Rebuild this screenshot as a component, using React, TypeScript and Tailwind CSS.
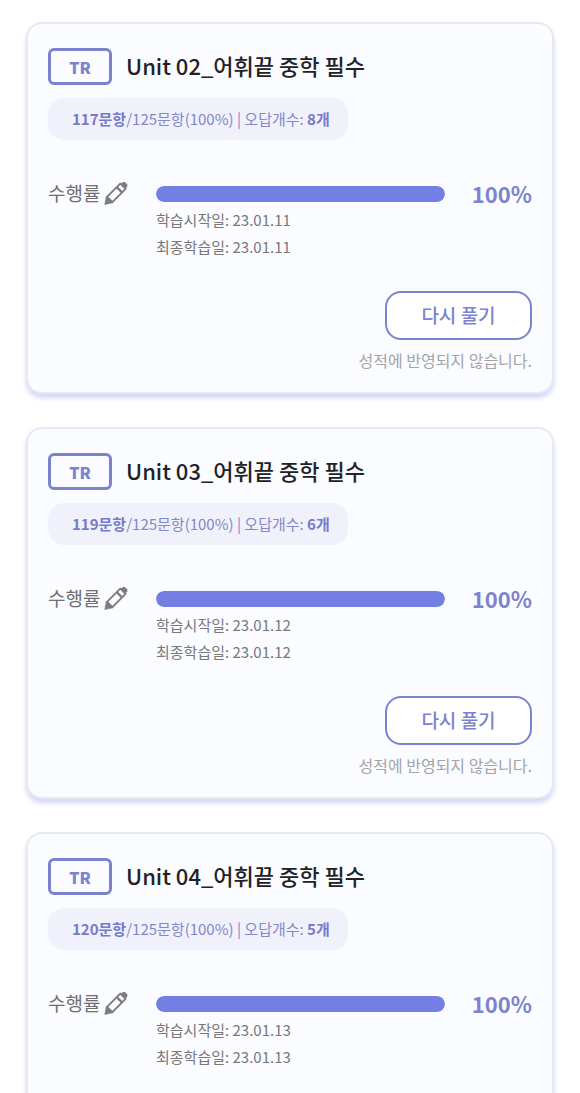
import React from "react";

interface Unit {
  id: number;
  title: string;
  solved: number;
  total: number;
  wrong: number;
  progress: number;
  startedAt: string;
  lastStudiedAt: string;
}

const units: Unit[] = [
  { id: 2, title: "Unit 02_어휘끝 중학 필수", solved: 117, total: 125, wrong: 8, progress: 100, startedAt: "23.01.11", lastStudiedAt: "23.01.11" },
  { id: 3, title: "Unit 03_어휘끝 중학 필수", solved: 119, total: 125, wrong: 6, progress: 100, startedAt: "23.01.12", lastStudiedAt: "23.01.12" },
  { id: 4, title: "Unit 04_어휘끝 중학 필수", solved: 120, total: 125, wrong: 5, progress: 100, startedAt: "23.01.13", lastStudiedAt: "23.01.13" },
];

function PencilIcon() {
  return (
    <svg className="h-6 w-6 shrink-0" viewBox="0 0 24 24" fill="none" aria-hidden="true">
      {/* Body */}
      <path d="M3 15.8 16.3 2.6 21.6 7.9 8.4 21.2z" stroke="#7b7b80" strokeWidth="1.9" strokeLinejoin="round" />
      {/* Band */}
      <path d="m12.6 6 5.6 5.6" stroke="#7b7b80" strokeWidth="2.4" />
      {/* Tip */}
      <path d="M2.3 15.3.8 23.5l8.3-1.8z" fill="#7b7b80" stroke="#7b7b80" strokeWidth=".6" strokeLinejoin="round" />
      {/* Eraser */}
      <path d="M17 2.6 19 1h1.8l2.5 2.5v1.9l-1.7 2.2z" fill="#7b7b80" />
    </svg>
  );
}

function UnitCard({ unit }: { unit: Unit }) {
  return (
    <article className="rounded-2xl border-2 border-[#e8e8f4] bg-[#fbfcff] px-5 pt-6 pb-5 shadow-[0_4px_5px_#d3d6fa]">
      {/* Title */}
      <div className="flex items-start gap-3.5">
        <span className="flex h-[37px] w-16 shrink-0 items-center justify-center rounded-md border-3 border-[#7b83cf] text-base leading-6 font-extrabold text-[#7b83cf]">
          TR
        </span>
        <h2 className="text-[22px] leading-[34px] font-medium text-[#222226]">{unit.title}</h2>
      </div>

      {/* Result summary */}
      <p className="mt-[13px] w-fit rounded-2xl bg-[#f1f1fc] pr-[18px] pl-6 text-[15px] leading-[42px] text-[#8288c8]">
        <strong className="font-bold text-[#747bca]">{unit.solved}문항</strong>/{unit.total}문항({unit.progress}%) | 오답개수:{" "}
        <strong className="font-bold text-[#747bca]">{unit.wrong}개</strong>
      </p>

      {/* Progress */}
      <div className="mt-[39px] flex items-start">
        <div className="flex w-[108px] shrink-0 items-center gap-1 text-[19px] leading-7 text-[#6e6e73]">
          수행률
          <PencilIcon />
        </div>
        <div className="flex-1 pt-[7px]">
          <div
            role="progressbar"
            aria-label="수행률"
            aria-valuenow={unit.progress}
            className="h-4 overflow-hidden rounded-full bg-[#e6e7f8]"
          >
            <div className="h-full rounded-full bg-[#737fe3]" style={{ width: `${unit.progress}%` }} />
          </div>
          <div className="mt-1 text-[15px] leading-[27px] text-[#77777c]">
            <p>학습시작일: {unit.startedAt}</p>
            <p>최종학습일: {unit.lastStudiedAt}</p>
          </div>
        </div>
        <span className="w-[87px] shrink-0 text-right text-[22px] leading-7 font-bold text-[#7b83cf]">
          {unit.progress}%
        </span>
      </div>

      {/* Retry */}
      <div className="mt-[31px] flex flex-col items-end">
        <button
          type="button"
          className="h-[49px] w-[147px] rounded-2xl border-2 border-[#7b83cf] bg-white text-[19px] font-medium text-[#7b83cf]"
        >
          다시 풀기
        </button>
        <p className="mt-2 text-base leading-6 text-[#a3a3a8]">성적에 반영되지 않습니다.</p>
      </div>
    </article>
  );
}

export default function App() {
  return (
    <main className="flex min-h-screen flex-col gap-[33px] bg-white px-[26px] py-[22px] font-['Noto_Sans_CJK_KR',sans-serif]">
      {units.map((unit) => (
        <UnitCard key={unit.id} unit={unit} />
      ))}
    </main>
  );
}
